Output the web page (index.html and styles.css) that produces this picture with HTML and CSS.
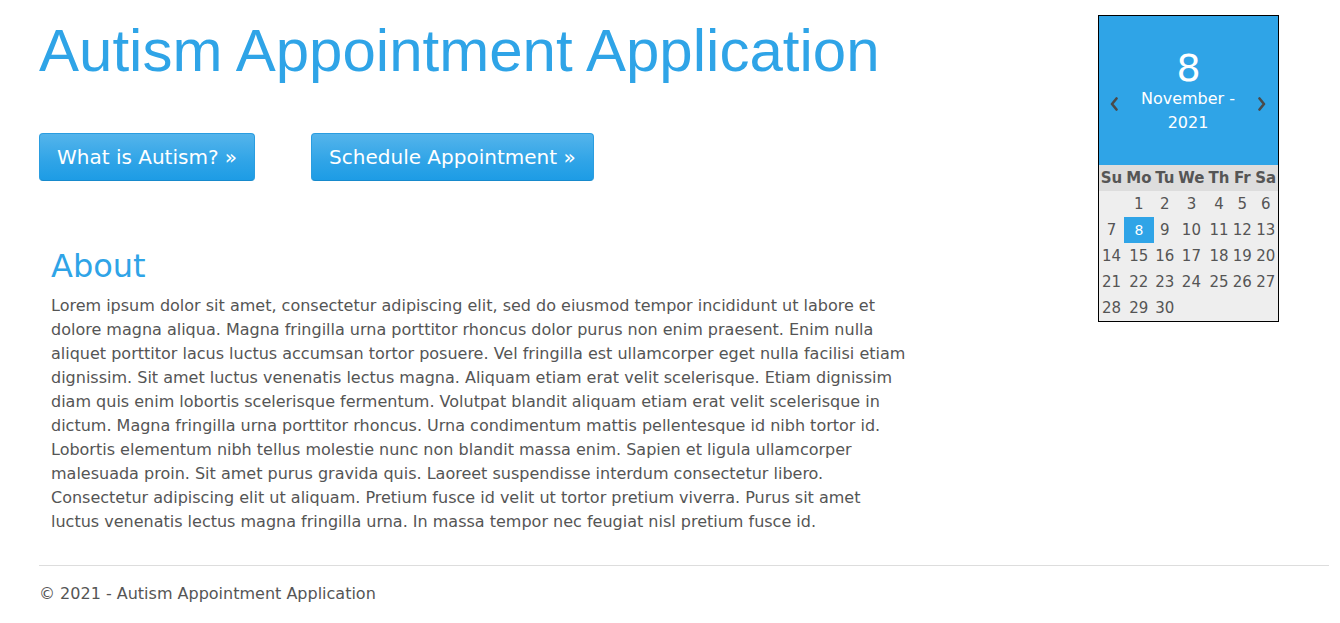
FILE: index.html
```html
<!DOCTYPE html>
<html lang="en">
<head>
<meta charset="utf-8">
<title>Autism Appointment Application</title>
<link rel="stylesheet" href="styles.css">
</head>
<body>
<div class="page">
  <div class="top">
    <main class="main">
      <h1 class="title">Autism Appointment Application</h1>
      <div class="actions">
        <a class="btn" href="#">What is Autism? &raquo;</a>
        <a class="btn" href="#">Schedule Appointment &raquo;</a>
      </div>
      <section class="about">
        <h2 class="about-title">About</h2>
        <p class="about-text">Lorem ipsum dolor sit amet, consectetur adipiscing elit, sed do eiusmod tempor incididunt ut labore et dolore magna aliqua. Magna fringilla urna porttitor rhoncus dolor purus non enim praesent. Enim nulla aliquet porttitor lacus luctus accumsan tortor posuere. Vel fringilla est ullamcorper eget nulla facilisi etiam dignissim. Sit amet luctus venenatis lectus magna. Aliquam etiam erat velit scelerisque. Etiam dignissim diam quis enim lobortis scelerisque fermentum. Volutpat blandit aliquam etiam erat velit scelerisque in dictum. Magna fringilla urna porttitor rhoncus. Urna condimentum mattis pellentesque id nibh tortor id. Lobortis elementum nibh tellus molestie nunc non blandit massa enim. Sapien et ligula ullamcorper malesuada proin. Sit amet purus gravida quis. Laoreet suspendisse interdum consectetur libero. Consectetur adipiscing elit ut aliquam. Pretium fusce id velit ut tortor pretium viverra. Purus sit amet luctus venenatis lectus magna fringilla urna. In massa tempor nec feugiat nisl pretium fusce id.</p>
      </section>
    </main>
    <aside class="calendar">
      <div class="cal-head">
        <div class="cal-day">8</div>
        <div class="cal-nav">
          <span class="cal-arrow"><svg width="8" height="14" viewBox="0 0 8 14"><path d="M6.5 1.5 L2 7 L6.5 12.5" fill="none" stroke="#4a4a4a" stroke-width="2.6" stroke-linecap="round" stroke-linejoin="round"/></svg></span>
          <div class="cal-month">November - 2021</div>
          <span class="cal-arrow"><svg width="8" height="14" viewBox="0 0 8 14"><path d="M1.5 1.5 L6 7 L1.5 12.5" fill="none" stroke="#4a4a4a" stroke-width="2.6" stroke-linecap="round" stroke-linejoin="round"/></svg></span>
        </div>
      </div>
      <table class="cal-table">
        <thead>
          <tr><th>Su</th><th>Mo</th><th>Tu</th><th>We</th><th>Th</th><th>Fr</th><th>Sa</th></tr>
        </thead>
        <tbody>
          <tr><td></td><td>1</td><td>2</td><td>3</td><td>4</td><td>5</td><td>6</td></tr>
          <tr><td>7</td><td class="selected">8</td><td>9</td><td>10</td><td>11</td><td>12</td><td>13</td></tr>
          <tr><td>14</td><td>15</td><td>16</td><td>17</td><td>18</td><td>19</td><td>20</td></tr>
          <tr><td>21</td><td>22</td><td>23</td><td>24</td><td>25</td><td>26</td><td>27</td></tr>
          <tr><td>28</td><td>29</td><td>30</td><td></td><td></td><td></td><td></td></tr>
        </tbody>
      </table>
    </aside>
  </div>
  <hr class="rule">
  <footer class="footer">
    <p>&copy; 2021 - Autism Appointment Application</p>
  </footer>
</div>
</body>
</html>
```
FILE: styles.css
```css
html, body {
  margin: 0;
  padding: 0;
  background: #fff;
}

body {
  font-family: "DejaVu Sans", Verdana, sans-serif;
  font-size: 16px;
  color: #555;
}

.page {
  padding: 0 11px 0 39px;
}

.top {
  display: flex;
  justify-content: space-between;
  align-items: flex-start;
}

.main {
  width: 890px;
}

.title {
  margin: 18px 0 0;
  font-family: "Liberation Sans", Arial, sans-serif;
  font-weight: normal;
  font-size: 60px;
  line-height: 66px;
  color: #2fa4e7;
  white-space: nowrap;
}

.actions {
  display: flex;
  gap: 56px;
  margin-top: 49px;
}

.btn {
  display: inline-block;
  padding: 10px 17px;
  font-size: 20px;
  line-height: 26px;
  color: #fff;
  text-decoration: none;
  border: 1px solid #2a9de0;
  border-bottom-color: #178acc;
  border-radius: 4px;
  background-image: linear-gradient(#54b4eb, #2fa4e7 60%, #1d9ce5);
}

.about {
  padding-left: 12px;
  margin-top: 68px;
}

.about-title {
  margin: 0 0 10px;
  font-size: 32px;
  line-height: 35px;
  font-weight: normal;
  color: #2fa4e7;
}

.about-text {
  margin: 0;
  width: 858px;
  line-height: 24px;
}

.calendar {
  width: 179px;
  margin-top: 15px;
  margin-right: 50px;
  border: 1px solid #000;
  background: #eee;
}

.cal-head {
  background: #2fa4e7;
  color: #fff;
  height: 149px;
  box-sizing: border-box;
  padding-top: 34px;
}

.cal-day {
  text-align: center;
  font-size: 38px;
  line-height: 36px;
}

.cal-nav {
  display: flex;
  align-items: flex-start;
  padding: 0 12px 0 11px;
}

.cal-arrow {
  display: block;
  margin-top: 10px;
  height: 14px;
}

.cal-month {
  flex: 1;
  padding: 1px 8px 0;
  text-align: center;
  font-size: 16px;
  line-height: 24px;
}

.cal-table {
  width: 100%;
  border-collapse: collapse;
  font-size: 15px;
}

.cal-table th {
  background: #ddd;
  font-weight: bold;
  height: 26px;
  padding: 0;
  text-align: center;
}

.cal-table td {
  height: 26px;
  padding: 0;
  text-align: center;
}

.cal-table td.selected {
  background: #2fa4e7;
  color: #fff;
  font-size: 14px;
}

.rule {
  margin: 31px 0 0;
  border: 0;
  border-top: 1px solid #ddd;
}

.footer p {
  margin: 16px 0 20px;
  line-height: 24px;
}
```
